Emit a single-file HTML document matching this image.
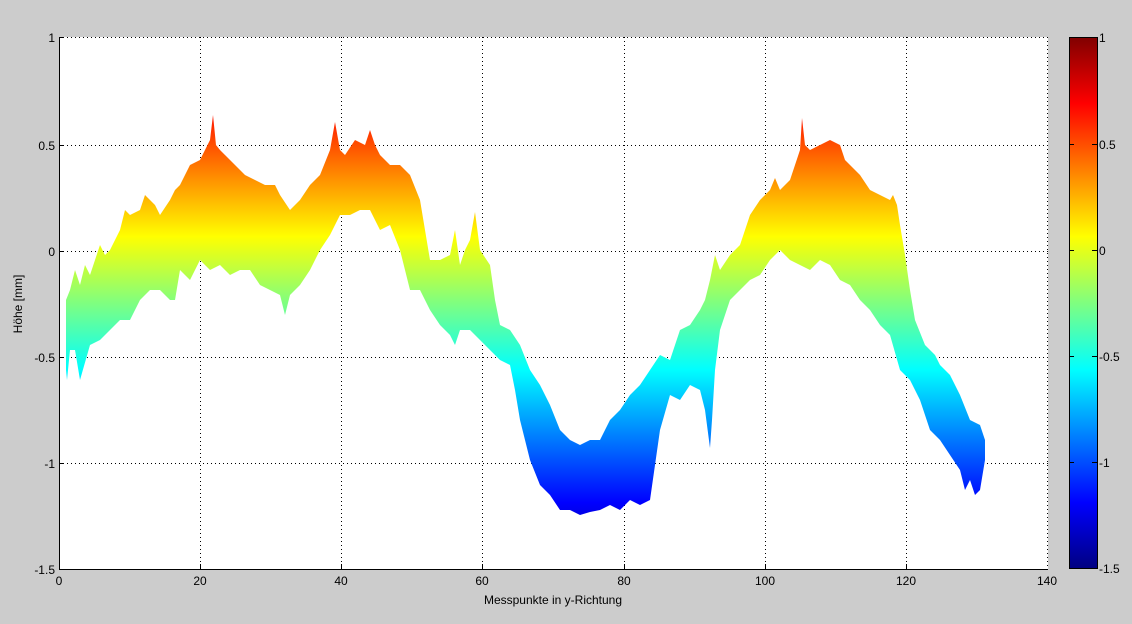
<!DOCTYPE html>
<html><head><meta charset="utf-8"><style>
html,body{margin:0;padding:0;background:#cccccc;}
svg{display:block;font-family:"Liberation Sans",sans-serif;font-size:12px;}
</style></head><body>
<svg width="1132" height="624" viewBox="0 0 1132 624" xmlns="http://www.w3.org/2000/svg">
<defs>
<linearGradient id="jet" gradientUnits="userSpaceOnUse" x1="0" y1="569" x2="0" y2="37">
<stop offset="0" stop-color="#000080"/>
<stop offset="0.125" stop-color="#0000ff"/>
<stop offset="0.375" stop-color="#00ffff"/>
<stop offset="0.625" stop-color="#ffff00"/>
<stop offset="0.875" stop-color="#ff0000"/>
<stop offset="1" stop-color="#800000"/>
</linearGradient>
</defs>
<rect x="59" y="37" width="989" height="532" fill="#fff"/>
<g stroke="#000" stroke-width="1" stroke-dasharray="1,3" fill="none">
<path d="M200.5 37V569M341.5 37V569M482.5 37V569M624.5 37V569M765.5 37V569M906.5 37V569M1047.5 37V569"/>
<path d="M59 37.5H1048M59 145.5H1048M59 251.5H1048M59 357.5H1048M59 463.5H1048"/>
</g>
<polygon fill="url(#jet)" points="66,300 70,290 75,270 80,285 85,265 90,275 100,245 105,255 110,250 115,240 120,230 125,210 130,215 140,210 145,195 150,200 155,205 160,215 170,200 175,190 180,185 185,175 190,165 200,160 205,150 210,140 213,115 216,145 220,150 225,155 235,165 245,175 255,180 265,185 275,185 280,195 290,210 300,200 310,185 320,175 330,150 335,122 340,150 345,155 355,140 365,145 370,130 375,145 380,155 390,165 400,165 410,175 420,200 425,230 430,260 440,260 450,255 455,230 460,265 465,250 470,240 475,212 480,250 490,265 495,300 500,325 510,330 520,345 530,370 540,385 550,405 560,430 570,440 580,445 590,440 600,440 605,430 610,420 620,410 630,395 640,385 650,370 660,355 670,360 680,330 690,325 700,310 705,300 710,280 715,255 720,270 730,255 740,245 750,215 760,200 770,190 775,178 780,190 790,180 800,150 802,118 805,145 810,150 820,145 830,140 840,145 845,160 860,175 870,190 880,195 890,200 893,195 897,205 900,225 905,255 910,290 915,320 925,345 935,355 940,365 950,375 960,395 970,420 980,425 985,440 985,460 980,490 975,495 970,480 965,490 960,470 950,455 940,440 930,430 920,400 910,380 900,370 890,335 880,325 870,310 860,300 850,285 840,280 830,265 820,260 810,270 800,265 790,260 780,250 770,260 760,275 750,280 740,290 730,300 720,330 715,370 712,420 710,448 705,410 700,390 690,385 680,400 670,395 660,430 655,465 650,500 640,505 630,500 620,510 610,505 600,510 590,512 580,515 570,510 560,510 550,495 540,485 530,460 520,420 515,390 510,365 500,360 490,350 480,340 470,330 460,330 455,345 450,335 440,325 430,310 420,290 410,290 400,250 390,225 380,230 370,210 360,210 350,215 340,215 330,235 320,250 310,270 300,285 290,295 285,315 280,295 270,290 260,285 250,270 240,270 230,275 220,265 210,270 200,260 190,280 180,270 175,300 170,300 160,290 150,290 140,300 130,320 120,320 110,330 100,340 90,345 80,380 75,350 70,350 67,380 66,370"/>
<g stroke="#000" stroke-width="1" fill="none">
<path d="M59.5 37V569.5H1048"/>
<path d="M200.5 569V564M341.5 569V564M482.5 569V564M624.5 569V564M765.5 569V564M906.5 569V564"/>
<path d="M59 37.5H64M59 145.5H64M59 251.5H64M59 357.5H64M59 463.5H64"/>
</g>
<g fill="#000" text-anchor="end">
<text x="55" y="42">1</text>
<text x="55" y="150">0.5</text>
<text x="55" y="256">0</text>
<text x="55" y="362">-0.5</text>
<text x="55" y="468">-1</text>
<text x="55" y="574">-1.5</text>
</g>
<g fill="#000" text-anchor="middle">
<text x="59" y="585">0</text>
<text x="200" y="585">20</text>
<text x="341" y="585">40</text>
<text x="482" y="585">60</text>
<text x="624" y="585">80</text>
<text x="765" y="585">100</text>
<text x="906" y="585">120</text>
<text x="1047" y="585">140</text>
<text x="553" y="604">Messpunkte in y-Richtung</text>
<text transform="translate(22,304) rotate(-90)">Höhe [mm]</text>
</g>
<rect x="1069.5" y="37.5" width="28" height="531" fill="url(#jet)" stroke="#000"/>
<g stroke="#000" fill="none">
<path d="M1069 37.5h5M1092 37.5h5M1069 144.5h5M1092 144.5h5M1069 250.5h5M1092 250.5h5M1069 356.5h5M1092 356.5h5M1069 462.5h5M1092 462.5h5M1069 568.5h5M1092 568.5h5"/>
</g>
<g fill="#000">
<text x="1099" y="42">1</text>
<text x="1099" y="149">0.5</text>
<text x="1099" y="255">0</text>
<text x="1099" y="361">-0.5</text>
<text x="1099" y="467">-1</text>
<text x="1099" y="573">-1.5</text>
</g>
</svg>
</body></html>
